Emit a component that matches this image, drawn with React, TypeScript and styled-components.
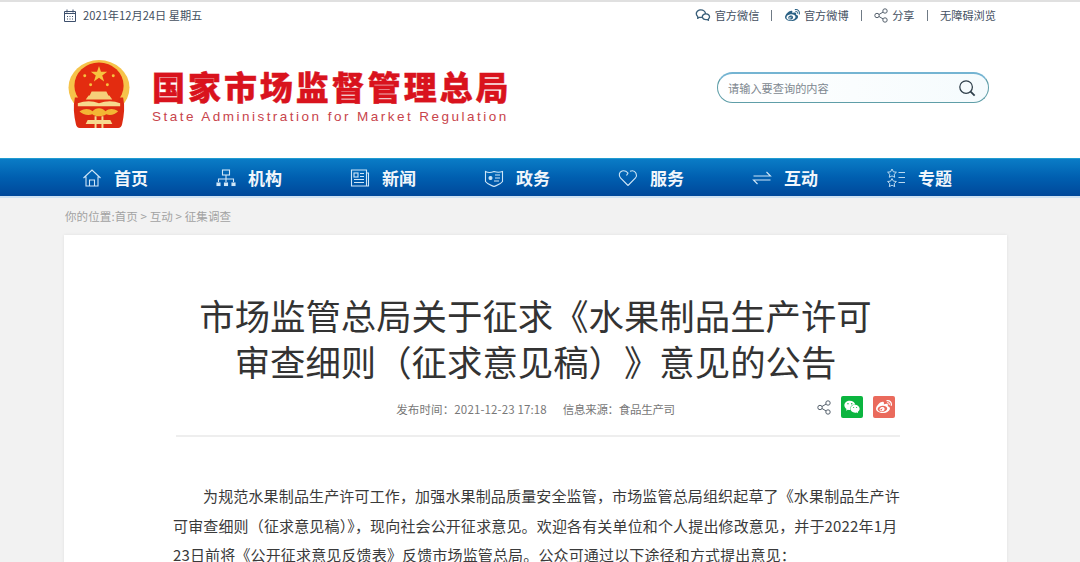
import React from "react";
import styled, { createGlobalStyle } from "styled-components";
import { FaWeibo, FaWeixin } from "react-icons/fa";
import { RiWechatLine } from "react-icons/ri";

const cjk = `"Noto Sans CJK SC", "Liberation Sans", sans-serif`;

const Global = createGlobalStyle`
  html, body { margin: 0; padding: 0; height: 562px; overflow: hidden; background: #f2f2f2; }
  body { font-family: ${cjk}; }
  * { box-sizing: border-box; }
`;

const Page = styled.div`
  width: 1080px;
  height: 562px;
  overflow: hidden;
`;

const TopBar = styled.div`
  height: 30px;
  border-top: 2px solid #e0e0e0;
  background: #fff;
  padding: 0 84px 2px 64px;
  display: flex;
  align-items: center;
  justify-content: space-between;
  font-size: 11.2px;
  color: #44505f;
`;

const DateBox = styled.div`
  display: flex;
  align-items: center;
  gap: 7px;
`;

const TopLinks = styled.div`
  display: flex;
  align-items: center;
`;

const TopLink = styled.span`
  display: flex;
  align-items: center;
  gap: 4px;
`;

const Sep = styled.i`
  width: 1px;
  height: 11px;
  background: #6f7a85;
  margin: 0 12.5px 0 12px;
`;

const Header = styled.header`
  height: 128px;
  background: #fff;
  padding: 0 91px 0 68px;
  display: flex;
  align-items: center;
  justify-content: space-between;
`;

const Brand = styled.div`
  display: flex;
  align-items: center;
  gap: 22px;
`;

const BrandText = styled.div`
  width: 360px;
  padding-top: 2px;
`;

const BrandName = styled.div`
  font-size: 33px;
  line-height: 40px;
  font-weight: 900;
  color: #d9131d;
  letter-spacing: 2.95px;
  white-space: nowrap;
  -webkit-text-stroke: 0.4px #d9131d;
`;

const BrandEn = styled.div`
  margin-top: 2px;
  font-family: "Liberation Sans", sans-serif;
  font-size: 13.5px;
  line-height: 17px;
  color: #c8444b;
  letter-spacing: 2.47px;
  white-space: nowrap;
`;

const Search = styled.div`
  width: 272px;
  height: 31px;
  margin-bottom: 13px;
  border-radius: 16px;
  border: 1px solid #5f9ea8;
  border-top: 2px solid #74b4d2;
  background: linear-gradient(90deg, #fff, #f5fbfd);
  display: flex;
  align-items: center;
  justify-content: space-between;
  padding: 0 12px 0 10px;
  font-size: 11.2px;
  color: #808890;
`;

const Nav = styled.nav`
  height: 40px;
  background: linear-gradient(180deg, #0a7cc6 0%, #005fb0 50%, #00489a 100%);
  border-top: 1px solid #1f9bd0;
  border-bottom: 2px solid #cfe2f3;
  padding-left: 82px;
  display: grid;
  grid-template-columns: repeat(7, 134px);
`;

const NavItem = styled.div`
  display: flex;
  align-items: center;
  gap: 12px;
  color: #f1f6fb;
  font-size: 17px;
  font-weight: 700;
  svg { flex: none; }
`;

const Crumbs = styled.div`
  height: 37px;
  padding: 0 0 2px 65px;
  display: flex;
  align-items: center;
  font-size: 11.5px;
  letter-spacing: 0.1px;
  color: #a2a2a2;
`;

const Card = styled.main`
  margin-left: 64px;
  width: 943px;
  height: 340px;
  background: #fff;
  box-shadow: 0 0 3px rgba(0, 0, 0, 0.08);
  padding-top: 57px;
`;

const Title = styled.h1`
  margin: 0;
  text-align: center;
  font-size: 35.4px;
  line-height: 46px;
  font-weight: 400;
  color: #333;
  text-spacing-trim: space-all;
`;

const Meta = styled.div`
  margin: 8px 0 0 112px;
  width: 724px;
  height: 45px;
  padding: 0 5px 10px 0;
  border-bottom: 2px solid #eeeeee;
  display: grid;
  grid-template-columns: 1fr auto 1fr;
  align-items: center;
  font-size: 11.5px;
  color: #777;
`;

const MetaText = styled.div`
  grid-column: 2;
  display: flex;
  gap: 16px;
  white-space: nowrap;
`;

const MetaItem = styled.span<{ $spacing: number }>`
  letter-spacing: ${(p) => p.$spacing}px;
`;

const Shares = styled.div`
  justify-self: end;
  display: flex;
  align-items: center;
  gap: 10px;
  margin-bottom: 3px;
`;

const ShareBtn = styled.span<{ $bg: string }>`
  width: 22px;
  height: 22px;
  border-radius: 2px;
  background: ${(p) => p.$bg};
  display: flex;
  align-items: center;
  justify-content: center;
  color: #fff;
  font-size: 16px;
`;

const Body = styled.p`
  margin: 44px 0 0 109px;
  width: 728px;
  font-size: 15px;
  line-height: 29.5px;
  letter-spacing: 0.15px;
  text-indent: 30px;
  color: #3a3a3a;
`;

const stroke = { fill: "none", stroke: "#cfe6f7", strokeWidth: 1.1 };

const HomeIcon = () => (
  <svg width="20" height="20" viewBox="0 0 20 20" {...stroke}>
    <path d="M1.500 10 10 2l8.500 8M4 8.500V18h12V8.500M7.500 18v-6h5v6M7.500 12h5" />
  </svg>
);
const OrgIcon = () => (
  <svg width="20" height="20" viewBox="0 0 20 20" {...stroke}>
    <rect x="6.500" y="2" width="7" height="5" />
    <path d="M10 7v4M2.500 14v-3h15v3M10 11v3" />
    <rect x="1" y="15" width="3" height="2.500" fill="#cfe6f7" />
    <rect x="8.500" y="15" width="3" height="2.500" fill="#cfe6f7" />
    <rect x="16" y="15" width="3" height="2.500" fill="#cfe6f7" />
  </svg>
);
const NewsIcon = () => (
  <svg width="20" height="20" viewBox="0 0 20 20" {...stroke}>
    <path d="M1.500 2h15v16h-15zM16.500 5h2v13h-2" />
    <rect x="4" y="5" width="4" height="4" />
    <path d="M10 5.500h4M10 8.500h4M4 11.500h10M4 14.500h10" />
  </svg>
);
const GovIcon = () => (
  <svg width="20" height="20" viewBox="0 0 20 20" {...stroke}>
    <path d="M1.500 3.500c3 1.500 6 1 8.500 0 3 1 6 1 8.500 0v10c-2 3-5 3.500-8.500 5-3.500-1.500-6.500-2-8.500-5z" />
    <circle cx="6.500" cy="10" r="1.500" fill="#cfe6f7" />
    <path d="M11 7h5M11 10h5M10 13h5" />
  </svg>
);
const HeartIcon = () => (
  <svg width="20" height="20" viewBox="0 0 20 20" {...stroke}>
    <path d="M10 17.500 2.500 10C.5 7.500 1 4 4 3c2.200-.700 4.200 0 6 2L8.500 7.500" />
    <path d="M12 3.300c2.500-1 5 0 6 2 1 2.200.500 3.500-.500 4.700L10 17.500" />
  </svg>
);
const SwapIcon = () => (
  <svg width="20" height="20" viewBox="0 0 20 20" {...stroke}>
    <path d="M1.500 8h17l-4-4M18.500 12h-17l4 4" />
  </svg>
);
const StarListIcon = () => (
  <svg width="20" height="20" viewBox="0 0 20 20" {...stroke} strokeWidth={0.9}>
    <path d="m6 1 1.400 2.800 3 .4-2.200 2.100.5 3L6 7.900 3.300 9.300l.5-3-2.200-2.100 3-.4zM6 10.500l1.400 2.600 3 .4-2.200 2.100.5 3L6 17.200l-2.700 1.400.5-3-2.200-2.100 3-.4z" />
    <path d="M12.500 4.500H19M12.500 9.500H19M12.500 14.500H19" />
  </svg>
);

const CalendarIcon = () => (
  <svg width="12" height="13" viewBox="0 0 12 13" fill="none" stroke="#3d4f6c">
    <path d="M.5 2.500h11v10H.5z" />
    <path d="M3 .5v3M9 .5v3M.5 4.500h11" />
    <path d="M3 7.500h1M5.500 7.500h1M8 7.500h1M3 10h1M5.500 10h1M8 10h1" />
  </svg>
);

const ShareIcon = () => (
  <svg width="14" height="15" viewBox="0 0 14 15" fill="none" stroke="#55606c">
    <circle cx="3" cy="7.500" r="2.200" />
    <circle cx="11" cy="3" r="2.200" />
    <circle cx="11" cy="12" r="2.200" />
    <path d="m5 6.500 4-2.400M5 8.500l4 2.400" />
  </svg>
);

const SearchIcon = () => (
  <svg width="18" height="18" viewBox="0 0 20 20" fill="none" stroke="#2f3f4a" strokeWidth="1.4">
    <circle cx="9" cy="9" r="7" />
    <path d="m14 14 4.500 4.500" strokeWidth="2" />
  </svg>
);

const Emblem = () => (
  <svg width="62" height="69" viewBox="0 0 63 70">
    <ellipse cx="31.500" cy="28" rx="31" ry="28" fill="#f6c34a" />
    <path d="M7 38c-2 9-1 18 1 27 .5 3 2 4 4 4h39c2 0 3.500-1 4-4 2-9 3-18 1-27z" fill="#dd2a12" />
    <ellipse cx="31.500" cy="26" rx="25" ry="23.500" fill="#e32c10" />
    <path d="m31.500 6 2 6 6.300 0-5 3.800 1.900 6-5.200-3.700-5.200 3.700 1.900-6-5-3.800 6.300 0z" fill="#f7c33f" />
    <circle cx="17" cy="16" r="1.500" fill="#f7c33f" />
    <circle cx="46" cy="16" r="1.500" fill="#f7c33f" />
    <circle cx="23" cy="25" r="1.500" fill="#f7c33f" />
    <circle cx="40" cy="25" r="1.500" fill="#f7c33f" />
    <path d="M21 36h21l3 4H18zM24 32h15l2 4H22z" fill="#f6cf7a" />
    <path d="M10 44c7-3 15-3 21.500 0 7-3 15-3 21.500 0v3H10z" fill="#f7d98e" />
    <path d="M12 52c5-3 9-3 13 0 3-4 10-4 13 0 4-3 8-3 13 0-3 3-8 5-12 3-2 1-3 2-7.500 2s-5-1-7-2c-4 2-10 0-13-3z" fill="#f3b634" />
    <path d="M20 61h23l2 4H18z" fill="#f7d98e" />
    <path d="M27 57h2v12h-2zM34 57h2v12h-2z" fill="#f7d98e" />
  </svg>
);

const items: [string, React.ReactNode][] = [
  ["首页", <HomeIcon />],
  ["机构", <OrgIcon />],
  ["新闻", <NewsIcon />],
  ["政务", <GovIcon />],
  ["服务", <HeartIcon />],
  ["互动", <SwapIcon />],
  ["专题", <StarListIcon />],
];

export default function App() {
  return (
    <Page>
      <Global />
      <TopBar>
        <DateBox>
          <CalendarIcon />
          <span>2021年12月24日 星期五</span>
        </DateBox>
        <TopLinks>
          <TopLink><RiWechatLine size={16} color="#3a5f7a" />官方微信</TopLink>
          <Sep />
          <TopLink><FaWeibo size={15} color="#2c6285" />官方微博</TopLink>
          <Sep />
          <TopLink><ShareIcon />分享</TopLink>
          <Sep />
          <span>无障碍浏览</span>
        </TopLinks>
      </TopBar>
      <Header>
        <Brand>
          <Emblem />
          <BrandText>
            <BrandName>国家市场监督管理总局</BrandName>
            <BrandEn>State Administration for Market Regulation</BrandEn>
          </BrandText>
        </Brand>
        <Search>
          <span>请输入要查询的内容</span>
          <SearchIcon />
        </Search>
      </Header>
      <Nav>
        {items.map(([label, icon]) => (
          <NavItem key={label}>
            {icon}
            {label}
          </NavItem>
        ))}
      </Nav>
      <Crumbs>你的位置:首页 &gt; 互动 &gt; 征集调查</Crumbs>
      <Card>
        <Title>
          市场监管总局关于征求《水果制品生产许可
          <br />
          审查细则（征求意见稿）》意见的公告
        </Title>
        <Meta>
          <MetaText>
            <MetaItem $spacing={0.13}>发布时间：2021-12-23 17:18</MetaItem>
            <MetaItem $spacing={-0.3}>信息来源：食品生产司</MetaItem>
          </MetaText>
          <Shares>
            <ShareIcon />
            <ShareBtn $bg="#0bb53f"><FaWeixin /></ShareBtn>
            <ShareBtn $bg="#ea6a5c"><FaWeibo /></ShareBtn>
          </Shares>
        </Meta>
        <Body>
          为规范水果制品生产许可工作，加强水果制品质量安全监管，市场监管总局组织起草了《水果制品生产许可审查细则（征求意见稿）》，现向社会公开征求意见。欢迎各有关单位和个人提出修改意见，并于2022年1月23日前将《公开征求意见反馈表》反馈市场监管总局。公众可通过以下途径和方式提出意见：
        </Body>
      </Card>
    </Page>
  );
}
